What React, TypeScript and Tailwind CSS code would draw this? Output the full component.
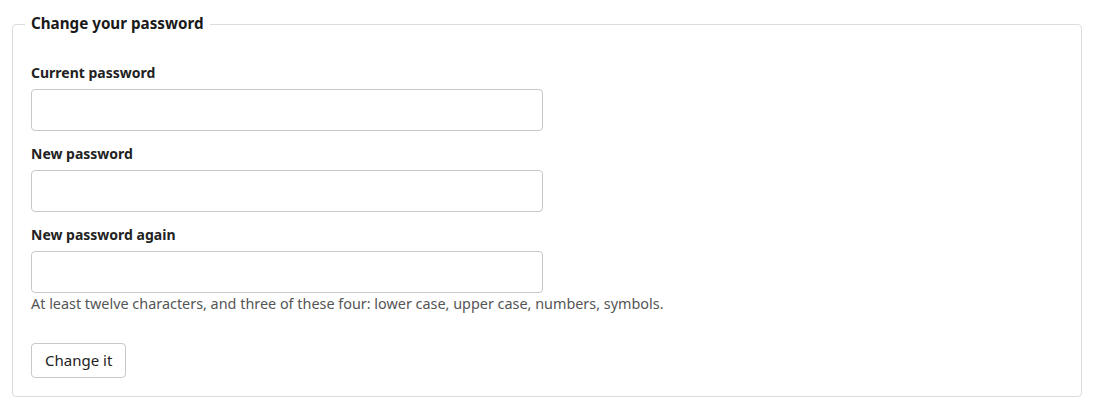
export default function App() {
  return (
    <div className="min-h-screen bg-white px-3 pt-[13px] font-['Noto_Sans',sans-serif] text-[#222]">
      <fieldset className="rounded border border-[#dcdcdc] pb-[18px] pl-[18px] pr-[18px] pt-[28px]">
        <legend className="-ml-1.5 px-1.5 pb-px text-[15.2px] font-bold leading-[21px] text-[#1a1a1a]">
          Change your password
        </legend>
        <form className="flex flex-col" onSubmit={(e) => e.preventDefault()}>
          <label className="mb-1.5 text-sm font-bold leading-5">Current password</label>
          <input
            type="password"
            className="h-[42px] w-[512px] rounded border border-[#c8c8c8] bg-white px-2"
          />
          <label className="mb-1.5 mt-[13px] text-sm font-bold leading-5">New password</label>
          <input
            type="password"
            className="h-[42px] w-[512px] rounded border border-[#c8c8c8] bg-white px-2"
          />
          <label className="mb-1.5 mt-[13px] text-sm font-bold leading-5">New password again</label>
          <input
            type="password"
            className="h-[42px] w-[512px] rounded border border-[#c8c8c8] bg-white px-2"
          />
          <p className="text-[14.4px] leading-[21.6px] text-[#555]">
            At least twelve characters, and three of these four: lower case, upper case, numbers, symbols.
          </p>
          <div className="mt-[28.4px]">
            <button
              type="submit"
              className="h-[35px] rounded border border-[#c8c8c8] bg-white px-[13px] text-[15px] text-[#222]"
            >
              Change it
            </button>
          </div>
        </form>
      </fieldset>
    </div>
  );
}
